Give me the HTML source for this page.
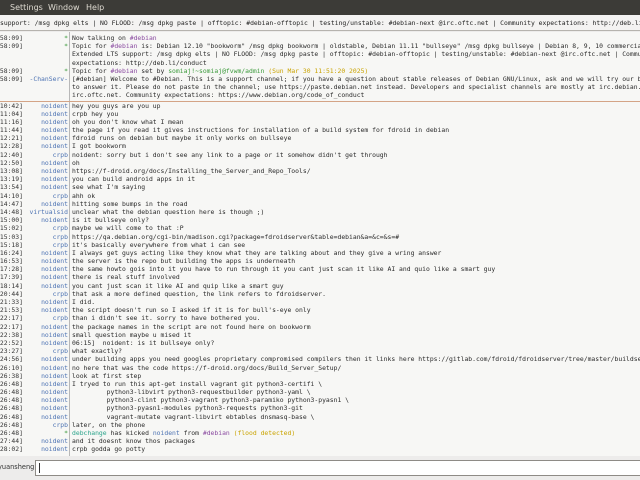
<!DOCTYPE html>
<html><head><meta charset="utf-8"><style>
*{margin:0;padding:0;box-sizing:border-box}
body{width:640px;height:480px;overflow:hidden;background:#edeceb;font-family:"DejaVu Sans Mono","Liberation Mono",monospace;position:relative}
#menu{position:absolute;left:0;top:0;width:640px;height:15px;background:#3c3b37;color:#dfdbd2;font-family:"DejaVu Sans","Liberation Sans",sans-serif;font-size:8px;line-height:15px}
#menu span{position:absolute;top:0}
#topic{position:absolute;left:0;top:15px;width:640px;height:16px;background:#f4f3f2;border-bottom:1px solid #b6b3ae;font-size:6.4px;line-height:16px;color:#222;white-space:pre;overflow:hidden}
#chat{position:absolute;left:0;top:32px;width:640px;height:424px;background:#f7f7f5;overflow:hidden;font-size:6.4px;color:#2a2a2a}
#sep{position:absolute;left:69px;top:0;width:1px;height:424px;background:#b8b8b8}
.l{position:relative;height:8.2px;line-height:8.2px;white-space:pre}
.t{position:absolute;left:-4px;top:0;color:#333}
.n{position:absolute;right:572px;top:0;color:#4d73b3;text-align:right}
.m{position:absolute;left:72px;top:0}
.g{color:#3b9a3b}.p{color:#8a4aa0}.y{color:#c9a300}.b{color:#4d73b3}.c{color:#2aa38a}
#hb{height:2px;position:relative}
#hb:after{content:"";position:absolute;left:0;right:0;top:1px;height:1px;background:#d4a486}
#inp{position:absolute;left:0;top:456px;width:640px;height:24px;background:#edeceb}
#lbl{position:absolute;left:-2px;top:4px;font-family:"DejaVu Sans","Liberation Sans",sans-serif;font-size:6.6px;line-height:14px;color:#333}
#box{position:absolute;left:35px;top:4px;width:606px;height:16px;background:#fff;border:1px solid #8e8b86}
#cur{position:absolute;left:3px;top:2px;width:1px;height:10px;background:#333}
</style></head><body>
<div id="menu"><span style="left:10px">Settings</span><span style="left:48px">Window</span><span style="left:86px">Help</span></div>
<div id="topic">support: /msg dpkg elts | NO FLOOD: /msg dpkg paste | offtopic: #debian-offtopic | testing/unstable: #debian-next @irc.oftc.net | Community expectations: http://deb.li/conduct</div>
<div id="chat">
<div id="sep"></div>
<div style="height:2px"></div>
<div class="l"><span class="t">[58:09]</span><span class="n g">*</span><span class="m">Now talking on <span class="p">#debian</span></span></div>
<div class="l"><span class="t">[58:09]</span><span class="n g">*</span><span class="m">Topic for <span class="p">#debian</span> is: Debian 12.10 "bookworm" /msg dpkg bookworm | oldstable, Debian 11.11 "bullseye" /msg dpkg bullseye | Debian 8, 9, 10 commercial</span></div>
<div class="l"><span class="m">Extended LTS support: /msg dpkg elts | NO FLOOD: /msg dpkg paste | offtopic: #debian-offtopic | testing/unstable: #debian-next @irc.oftc.net | Community</span></div>
<div class="l"><span class="m">expectations: http://deb.li/conduct</span></div>
<div class="l"><span class="t">[58:09]</span><span class="n g">*</span><span class="m">Topic for <span class="p">#debian</span> set by <span class="g">somiaj!~somiaj@fvwm/admin</span> <span class="y">(Sun Mar 30 11:51:20 2025)</span></span></div>
<div class="l"><span class="t">[58:09]</span><span class="n">-ChanServ-</span><span class="m">[#debian] Welcome to #Debian. This is a support channel; if you have a question about stable releases of Debian GNU/Linux, ask and we will try our best</span></div>
<div class="l"><span class="m">to answer it. Please do not paste in the channel; use https://paste.debian.net instead. Developers and specialist channels are mostly at irc.debian.org</span></div>
<div class="l"><span class="m">irc.oftc.net. Community expectations: https://www.debian.org/code_of_conduct</span></div>
<div id="hb"></div>
<div class="l"><span class="t">[10:42]</span><span class="n">noident</span><span class="m">hey you guys are you up</span></div>
<div class="l"><span class="t">[11:04]</span><span class="n">noident</span><span class="m">crpb hey you</span></div>
<div class="l"><span class="t">[11:16]</span><span class="n">noident</span><span class="m">oh you don't know what I mean</span></div>
<div class="l"><span class="t">[11:44]</span><span class="n">noident</span><span class="m">the page if you read it gives instructions for installation of a build system for fdroid in debian</span></div>
<div class="l"><span class="t">[12:21]</span><span class="n">noident</span><span class="m">fdroid runs on debian but maybe it only works on bullseye</span></div>
<div class="l"><span class="t">[12:28]</span><span class="n">noident</span><span class="m">I got bookworm</span></div>
<div class="l"><span class="t">[12:40]</span><span class="n">crpb</span><span class="m">noident: sorry but i don't see any link to a page or it somehow didn't get through</span></div>
<div class="l"><span class="t">[12:50]</span><span class="n">noident</span><span class="m">oh</span></div>
<div class="l"><span class="t">[13:08]</span><span class="n">noident</span><span class="m">https://f-droid.org/docs/Installing_the_Server_and_Repo_Tools/</span></div>
<div class="l"><span class="t">[13:19]</span><span class="n">noident</span><span class="m">you can build android apps in it</span></div>
<div class="l"><span class="t">[13:54]</span><span class="n">noident</span><span class="m">see what I'm saying</span></div>
<div class="l"><span class="t">[14:10]</span><span class="n">crpb</span><span class="m">ahh ok</span></div>
<div class="l"><span class="t">[14:47]</span><span class="n">noident</span><span class="m">hitting some bumps in the road</span></div>
<div class="l"><span class="t">[14:48]</span><span class="n">virtualsid</span><span class="m">unclear what the debian question here is though ;)</span></div>
<div class="l"><span class="t">[15:00]</span><span class="n">noident</span><span class="m">is it bullseye only?</span></div>
<div class="l"><span class="t">[15:02]</span><span class="n">crpb</span><span class="m">maybe we will come to that :P</span></div>
<div class="l"><span class="t">[15:03]</span><span class="n">crpb</span><span class="m">https://qa.debian.org/cgi-bin/madison.cgi?package=fdroidserver&amp;table=debian&amp;a=&amp;c=&amp;s=#</span></div>
<div class="l"><span class="t">[15:18]</span><span class="n">crpb</span><span class="m">it's basically everywhere from what i can see</span></div>
<div class="l"><span class="t">[16:24]</span><span class="n">noident</span><span class="m">I always get guys acting like they know what they are talking about and they give a wring answer</span></div>
<div class="l"><span class="t">[16:53]</span><span class="n">noident</span><span class="m">the server is the repo but building the apps is underneath</span></div>
<div class="l"><span class="t">[17:28]</span><span class="n">noident</span><span class="m">the same howto gois into it you have to run through it you cant just scan it like AI and quio like a smart guy</span></div>
<div class="l"><span class="t">[17:39]</span><span class="n">noident</span><span class="m">there is real stuff involved</span></div>
<div class="l"><span class="t">[18:14]</span><span class="n">noident</span><span class="m">you cant just scan it like AI and quip like a smart guy</span></div>
<div class="l"><span class="t">[20:44]</span><span class="n">crpb</span><span class="m">that ask a more defined question, the link refers to fdroidserver.</span></div>
<div class="l"><span class="t">[21:33]</span><span class="n">noident</span><span class="m">I did.</span></div>
<div class="l"><span class="t">[21:53]</span><span class="n">noident</span><span class="m">the script doesn't run so I asked if it is for bull's-eye only</span></div>
<div class="l"><span class="t">[22:17]</span><span class="n">crpb</span><span class="m">than i didn't see it. sorry to have bothered you.</span></div>
<div class="l"><span class="t">[22:17]</span><span class="n">noident</span><span class="m">the package names in the script are not found here on bookworm</span></div>
<div class="l"><span class="t">[22:38]</span><span class="n">noident</span><span class="m">small question maybe u mised it</span></div>
<div class="l"><span class="t">[22:52]</span><span class="n">noident</span><span class="m">06:15]  noident: is it bullseye only?</span></div>
<div class="l"><span class="t">[23:27]</span><span class="n">crpb</span><span class="m">what exactly?</span></div>
<div class="l"><span class="t">[24:56]</span><span class="n">noident</span><span class="m">under building apps you need googles proprietary compromised compilers then it links here https://gitlab.com/fdroid/fdroidserver/tree/master/buildserver</span></div>
<div class="l"><span class="t">[26:10]</span><span class="n">noident</span><span class="m">no here that was the code https://f-droid.org/docs/Build_Server_Setup/</span></div>
<div class="l"><span class="t">[26:38]</span><span class="n">noident</span><span class="m">look at first step</span></div>
<div class="l"><span class="t">[26:48]</span><span class="n">noident</span><span class="m">I tryed to run this apt-get install vagrant git python3-certifi \</span></div>
<div class="l"><span class="t">[26:48]</span><span class="n">noident</span><span class="m">         python3-libvirt python3-requestbuilder python3-yaml \</span></div>
<div class="l"><span class="t">[26:48]</span><span class="n">noident</span><span class="m">         python3-clint python3-vagrant python3-paramiko python3-pyasn1 \</span></div>
<div class="l"><span class="t">[26:48]</span><span class="n">noident</span><span class="m">         python3-pyasn1-modules python3-requests python3-git</span></div>
<div class="l"><span class="t">[26:48]</span><span class="n">noident</span><span class="m">         vagrant-mutate vagrant-libvirt ebtables dnsmasq-base \</span></div>
<div class="l"><span class="t">[26:48]</span><span class="n">crpb</span><span class="m">later, on the phone</span></div>
<div class="l"><span class="t">[26:48]</span><span class="n g">*</span><span class="m"><span class="c">debchange</span> has kicked <span class="b">noident</span> from <span class="p">#debian</span> <span class="y">(flood detected)</span></span></div>
<div class="l"><span class="t">[27:44]</span><span class="n">noident</span><span class="m">and it doesnt know thos packages</span></div>
<div class="l"><span class="t">[28:02]</span><span class="n">noident</span><span class="m">crpb godda go potty</span></div>
</div>
<div id="inp"><div id="lbl">yuansheng</div><div id="box"><div id="cur"></div></div></div>
</body></html>
